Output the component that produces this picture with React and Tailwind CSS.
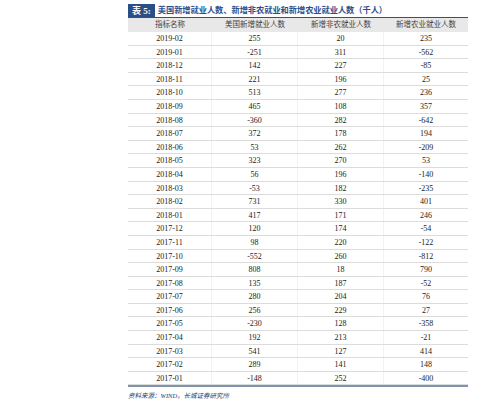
const rows = [
  ['2019-02', '255', '20', '235'],
  ['2019-01', '-251', '311', '-562'],
  ['2018-12', '142', '227', '-85'],
  ['2018-11', '221', '196', '25'],
  ['2018-10', '513', '277', '236'],
  ['2018-09', '465', '108', '357'],
  ['2018-08', '-360', '282', '-642'],
  ['2018-07', '372', '178', '194'],
  ['2018-06', '53', '262', '-209'],
  ['2018-05', '323', '270', '53'],
  ['2018-04', '56', '196', '-140'],
  ['2018-03', '-53', '182', '-235'],
  ['2018-02', '731', '330', '401'],
  ['2018-01', '417', '171', '246'],
  ['2017-12', '120', '174', '-54'],
  ['2017-11', '98', '220', '-122'],
  ['2017-10', '-552', '260', '-812'],
  ['2017-09', '808', '18', '790'],
  ['2017-08', '135', '187', '-52'],
  ['2017-07', '280', '204', '76'],
  ['2017-06', '256', '229', '27'],
  ['2017-05', '-230', '128', '-358'],
  ['2017-04', '192', '213', '-21'],
  ['2017-03', '541', '127', '414'],
  ['2017-02', '289', '141', '148'],
  ['2017-01', '-148', '252', '-400'],
];

const cols = ['w-[84px]', 'w-[86px]', 'w-[86px]', 'w-[84px]'];

export default function App() {
  return (
    <div
      className="w-[500px] h-[404px] bg-white pt-[4px] pl-[128px]"
      style={{ fontFamily: '"Liberation Serif", "Noto Sans CJK SC", serif' }}
    >
      <div className="w-[340px]">
        <div className="flex items-center h-[14px] border-b border-[#3b4f6e]">
          <div className="h-full bg-[#2b4e86] text-white text-[9px] font-bold leading-[14px] px-[4px] mr-[3px]">
            表 5:
          </div>
          <div className="text-[8.2px] font-bold text-[#2b4e8c] leading-[14px] whitespace-nowrap">
            美国新增就业人数、新增非农就业和新增农业就业人数（千人）
          </div>
        </div>
        <div className="flex h-[14px] bg-[#e8e8e8] text-[7.5px] text-[#444] leading-[14px]">
          {['指标名称', '美国新增就业人数', '新增非农就业人数', '新增农业就业人数'].map((h, i) => (
            <div key={i} className={`${cols[i]} text-center`}>
              {h}
            </div>
          ))}
        </div>
        {rows.map((r) => (
          <div
            key={r[0]}
            className="flex h-[13.6px] border-b border-[#dcdcdc] text-[8px] text-[#222] leading-[13px]"
          >
            {r.map((c, i) => (
              <div
                key={i}
                className={`${cols[i]} text-center ${i < 3 ? 'border-r border-[#f2f2f2]' : ''}`}
              >
                {c}
              </div>
            ))}
          </div>
        ))}
        <div className="h-[2px] bg-[#7f93ad]" />
        <div className="mt-[4px] text-[6.5px] italic text-[#1f3a6a] whitespace-nowrap">
          资料来源：WIND，长城证券研究所
        </div>
      </div>
    </div>
  );
}
